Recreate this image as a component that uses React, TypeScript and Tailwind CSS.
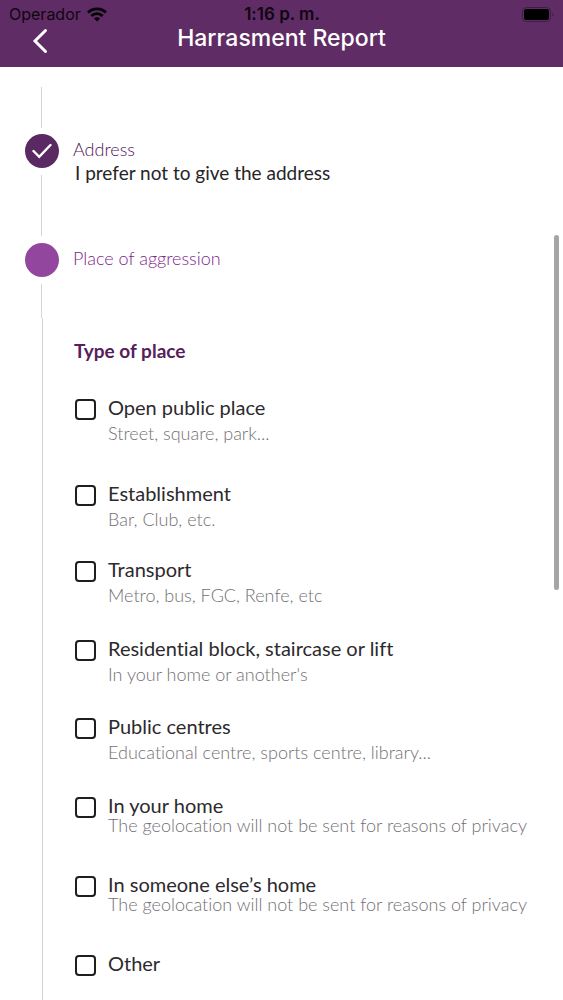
type Place = {
  id: string;
  label: string;
  hint?: string;
  height: string;
  hintGap?: string;
};

const PLACES: Place[] = [
  { id: 'open', label: 'Open public place', hint: 'Street, square, park...', height: 'min-h-[86px]', hintGap: 'mt-[6px]' },
  { id: 'establishment', label: 'Establishment', hint: 'Bar, Club, etc.', height: 'min-h-[76px]', hintGap: 'mt-[6px]' },
  { id: 'transport', label: 'Transport', hint: 'Metro, bus, FGC, Renfe, etc', height: 'min-h-[79px]', hintGap: 'mt-[6px]' },
  { id: 'residential', label: 'Residential block, staircase or lift', hint: "In your home or another's", height: 'min-h-[78px]', hintGap: 'mt-[6px]' },
  { id: 'public', label: 'Public centres', hint: 'Educational centre, sports centre, library...', height: 'min-h-[79px]', hintGap: 'mt-[6px]' },
  { id: 'home', label: 'In your home', hint: 'The geolocation will not be sent for reasons of privacy', height: 'min-h-[79px]' },
  { id: 'other-home', label: 'In someone else’s home', hint: 'The geolocation will not be sent for reasons of privacy', height: 'min-h-[79px]' },
  { id: 'other', label: 'Other', height: 'min-h-[43px]' },
];

function WifiIcon() {
  return (
    <svg viewBox="0 0 20 15" className="h-[15px] w-5" fill="none" stroke="#050206" strokeWidth="2.8" aria-hidden="true">
      <path d="M1 5.6C6 .6 14 .6 19 5.6" />
      <path d="M4.3 9.1c3.3-3.2 8.1-3.2 11.4 0" />
      <path d="M10 14.6 6.9 11.5c1.8-1.6 4.4-1.6 6.2 0Z" fill="#050206" stroke="none" />
    </svg>
  );
}

function BatteryIcon() {
  return (
    <svg viewBox="0 0 33 15" className="h-[15px] w-[33px]" aria-hidden="true">
      <rect x=".5" y=".5" width="28" height="14" rx="4" fill="none" stroke="#3b1f42" />
      <rect x="2" y="2" width="25" height="11" rx="2.5" fill="#000" />
      <path d="M30.5 5.5c1.6.6 1.6 3.4 0 4Z" fill="#3b1f42" />
    </svg>
  );
}

function Header() {
  return (
    <header className="h-[67px] bg-[#5f2c66] font-[Inter,sans-serif]">
      <div className="grid h-7 grid-cols-[1fr_auto_1fr] items-center pr-2 pl-[9px] text-[#10060f]">
        <div className="flex items-center gap-[6px]">
          <span className="text-[16px] leading-5">Operador</span>
          <WifiIcon />
        </div>
        <span className="text-[17px] leading-5 font-semibold">1:16 p. m.</span>
        <div className="flex justify-end">
          <BatteryIcon />
        </div>
      </div>
      <div className="grid grid-cols-[1fr_auto_1fr] items-start px-8 text-white">
        <button type="button" aria-label="Back" className="h-[26px] w-4">
          <svg viewBox="0 0 16 26" className="h-[26px] w-4" fill="none" stroke="currentColor" strokeWidth="3" strokeLinecap="round">
            <path d="M13.5 2.5 3 13l10.5 10.5" strokeLinejoin="miter" />
          </svg>
        </button>
        <h1 className="text-[23px] leading-5 font-medium">Harrasment Report</h1>
      </div>
    </header>
  );
}

function Steps() {
  return (
    <div className="pt-5 pl-[25px]">
      <div className="mb-[6px] ml-4 h-[41px] w-px bg-[#d4d4d4]" />
      <ol>
        <li className="flex min-h-[109px] gap-[14px]">
          <div className="flex w-[34px] flex-col">
            <div className="flex h-[34px] items-center justify-center rounded-full bg-[#5a2862]">
              <svg viewBox="0 0 20 16" className="h-4 w-5" fill="none" stroke="#fff" strokeWidth="2.4" strokeLinecap="round" aria-hidden="true">
                <path d="m1.5 8 5.7 5.8L18.5 2" />
              </svg>
            </div>
            <div className="my-[7px] ml-4 w-px flex-1 bg-[#d4d4d4]" />
          </div>
          <div className="pt-[3px]">
            <p className="text-[18px] leading-6 font-light text-[#4f1459]">Address</p>
            <p className="pl-[2px] text-[19px] leading-6 text-[#262427]">I prefer not to give the address</p>
          </div>
        </li>
        <li className="flex min-h-[75px] gap-[14px]">
          <div className="flex w-[34px] flex-col">
            <div className="h-[34px] rounded-full bg-[#93469d]" />
            <div className="mt-[7px] ml-4 w-px flex-1 bg-[#d4d4d4]" />
          </div>
          <p className="pt-[3px] text-[18px] leading-6 font-light text-[#7d2589]">Place of aggression</p>
        </li>
      </ol>
    </div>
  );
}

function PlaceOption({ place }: { place: Place }) {
  return (
    <li className={place.height}>
      <label htmlFor={place.id} className="flex items-start gap-3">
        <input
          id={place.id}
          type="checkbox"
          className="mt-[2px] h-[21px] w-[21px] shrink-0 appearance-none rounded-[4px] border-2 border-[#1f1d20] bg-white checked:bg-[#5a2862]"
        />
        <span>
          <span className="block text-[20px] leading-5 text-[#2c2a2d]">{place.label}</span>
          {place.hint && (
            <span className={`block text-[18px] leading-5 font-light text-[#737074] ${place.hintGap ?? ''}`}>{place.hint}</span>
          )}
        </span>
      </label>
    </li>
  );
}

export default function App() {
  return (
    <div className="relative flex min-h-screen flex-col bg-white font-[Lato,sans-serif] [font-variant-ligatures:none]">
      <Header />
      <main className="flex flex-1 flex-col">
        <Steps />
        <section className="ml-[42px] flex-1 border-l border-[#d4d4d4] pt-[21px] pl-[31px]">
          <h2 className="mb-[34px] text-[19px] leading-6 font-bold text-[#55205c]">Type of place</h2>
          <ul className="pl-px">
            {PLACES.map(place => (
              <PlaceOption key={place.id} place={place} />
            ))}
          </ul>
        </section>
      </main>
      <div className="absolute top-[235px] right-1 h-[355px] w-[5px] rounded-full bg-[#a5a5a5]" />
    </div>
  );
}
